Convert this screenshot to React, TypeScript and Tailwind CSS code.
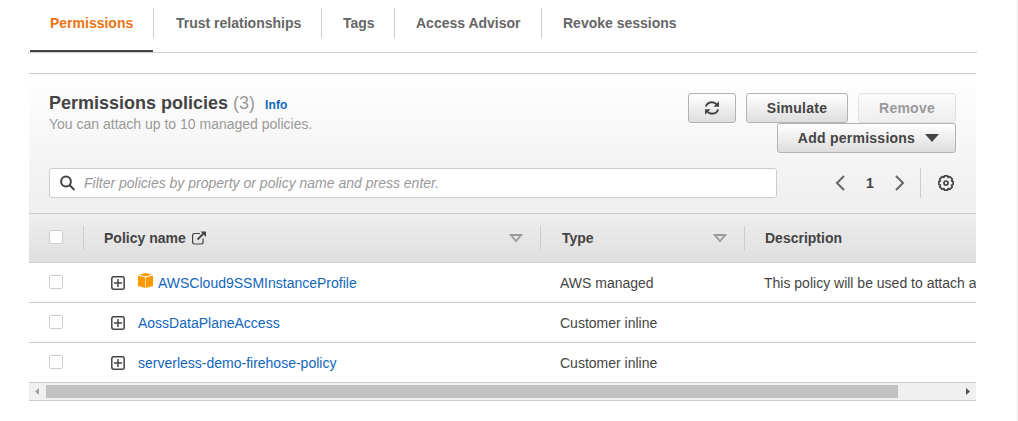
import type { ReactNode } from "react";

const tabs = [
  { label: "Permissions", box: "w-[123px] pl-5 text-[#ec7211]" },
  { label: "Trust relationships", box: "w-[168px] pl-[22px] border-l border-[#ccc] text-[#666]" },
  { label: "Tags", box: "w-[73px] pl-[21px] border-l border-[#ccc] text-[#666]" },
  { label: "Access Advisor", box: "w-[147px] pl-[21px] border-l border-[#ccc] text-[#666]" },
  { label: "Revoke sessions", box: "w-[160px] pl-[21px] border-l border-[#ccc] text-[#666]" },
];

const rows = [
  { name: "AWSCloud9SSMInstanceProfile", type: "AWS managed", description: "This policy will be used to attach a", managed: true },
  { name: "AossDataPlaneAccess", type: "Customer inline", description: "", managed: false },
  { name: "serverless-demo-firehose-policy", type: "Customer inline", description: "", managed: false },
];

function Tabs() {
  return (
    <nav className="ml-[28px] h-[53px] w-[949px] border-b border-[#ccc] pl-[2px] pt-2">
      <div className="flex h-[30px] text-sm font-bold leading-[30px]">
        {tabs.map((t) => (
          <div key={t.label} className={`shrink-0 whitespace-nowrap ${t.box}`}>{t.label}</div>
        ))}
      </div>
      <div className="mt-3 h-[2px] w-[123px] bg-[#444]" />
    </nav>
  );
}

function Button({ children, className = "", disabled = false }: { children: ReactNode; className?: string; disabled?: boolean }) {
  const tone = disabled
    ? "border-[#e3e3e3] bg-linear-to-b from-[#fbfbfb] to-[#eeeeee] text-[#999]"
    : "border-[#b3b3b3] bg-linear-to-b from-white to-[#dedede] text-[#444]";
  return (
    <button
      disabled={disabled}
      className={`flex h-[30px] items-center justify-center rounded-[3px] border text-sm font-bold leading-7 tracking-[0.25px] ${tone} ${className}`}
    >
      {children}
    </button>
  );
}

function RefreshIcon() {
  return (
    <svg width="16" height="16" viewBox="0 0 16 16" fill="none" stroke="#444" strokeWidth="2">
      <path d="M1.800 6.500C2.800 3.800 5 2.300 8 2.300c2 0 3.600.8 4.700 2.200" />
      <path d="M14.200 9.500c-1 2.700-3.200 4.200-6.200 4.200-2 0-3.600-.8-4.700-2.200" />
      <path d="M15 1.200v5.600H9.600z" fill="#444" stroke="none" />
      <path d="M1 14.800V9.200h5.400z" fill="#444" stroke="none" />
    </svg>
  );
}

function SearchIcon() {
  return (
    <svg width="16" height="16" viewBox="0 0 16 16" fill="none" stroke="#444" strokeWidth="2">
      <circle cx="6" cy="6.500" r="4.900" />
      <path d="M9.500 10l5 5" />
    </svg>
  );
}

function ArrowIcon({ flip = false }: { flip?: boolean }) {
  return (
    <svg width="10" height="16" viewBox="0 0 10 16" fill="none" stroke="#666" strokeWidth="2">
      <path d={flip ? "M1 1l7 7-7 7" : "M9 1L2 8l7 7"} />
    </svg>
  );
}

function GearIcon() {
  return (
    <svg width="16" height="16" viewBox="0 0 16 16" fill="none" stroke="#444" strokeWidth="1.700" strokeLinejoin="round">
      <path d="M6.500.9h3l.6 1.500 1.700-.7 2.500 2.500-.7 1.700 1.500.6v3l-1.500.6.7 1.700-2.500 2.500-1.700-.7-.6 1.500h-3l-.6-1.500-1.700.7-2.500-2.500.7-1.700-1.500-.6v-3l1.500-.6-.7-1.700 2.500-2.500 1.700.7z" />
      <circle cx="8" cy="8" r="2" />
    </svg>
  );
}

function ExternalIcon() {
  return (
    <svg width="15" height="14" viewBox="0 0 15 14" fill="none" stroke="#444" strokeWidth="1.200">
      <path d="M8 2.500H2.500Q.6 2.500.6 4.400v6.700q0 1.900 1.900 1.900h6.700q1.900 0 1.900-1.900V7.500" />
      <path d="M5.500 8.500L12 2" strokeWidth="1.800" />
      <path d="M8.500.500H14V6z" fill="#444" stroke="none" />
    </svg>
  );
}

function SortIcon() {
  return (
    <svg width="14" height="9" viewBox="0 0 14 9" fill="none" stroke="#999" strokeWidth="1.800">
      <path d="M1.800 1h10.400L7 7.200z" />
    </svg>
  );
}

function PlusIcon() {
  return (
    <svg width="14" height="14" viewBox="0 0 14 14" fill="none" stroke="#444">
      <rect x=".8" y=".8" width="12.400" height="12.400" rx="2" strokeWidth="1.500" />
      <path d="M7 3v8M3 7h8" strokeWidth="1.500" />
    </svg>
  );
}

function CubeIcon() {
  return (
    <svg width="15" height="15" viewBox="0 0 15 15" fill="#ff9900">
      <path d="M7.500 0L14 1.700 7.500 3.400 1 1.700z" />
      <path d="M0 2.500l7.200 1.900V15L0 13z" />
      <path d="M15 2.500L7.800 4.400V15L15 13z" />
    </svg>
  );
}

function Checkbox() {
  return <span className="block size-[14px] shrink-0 rounded-[2px] border border-[#ccc] bg-white" />;
}

function PanelHeader() {
  return (
    <header className="h-[139px] bg-linear-to-b from-white to-[#eeeeee] pl-5 pr-5 pt-[19px]">
      <div className="flex h-[75px] justify-between">
        <div className="-mt-px">
          <h2 className="flex h-[22px] items-baseline text-lg font-bold leading-[22px] text-[#444]">
            Permissions policies
            <span className="ml-[5px] font-normal text-[#999]">(3)</span>
            <a className="ml-[10px] text-xs font-bold tracking-[0.1px] text-[#1166bb]">Info</a>
          </h2>
          <p className="text-sm leading-5 text-[#999]">You can attach up to 10 managed policies.</p>
        </div>
        <div className="flex flex-col items-end">
          <div className="flex gap-[10px]">
            <Button className="w-[48px]"><RefreshIcon /></Button>
            <Button className="w-[102px]">Simulate</Button>
            <Button className="w-[98px]" disabled>Remove</Button>
          </div>
          <Button className="w-[179px] gap-[10px] pl-1">
            Add permissions
            <svg width="14" height="8" viewBox="0 0 14 8" fill="#444"><path d="M0 0h14L7 8z" /></svg>
          </Button>
        </div>
      </div>
      <div className="flex items-center justify-between">
        <div className="flex h-[30px] w-[728px] items-center rounded-[3px] border border-[#ccc] bg-white pl-[10px]">
          <SearchIcon />
          <span className="ml-2 text-sm italic text-[#999]">Filter policies by property or policy name and press enter.</span>
        </div>
        <div className="flex h-[30px] items-center pr-[2px] text-sm text-[#444]">
          <ArrowIcon />
          <span className="ml-[21px] w-2 font-bold">1</span>
          <span className="ml-[21px]"><ArrowIcon flip /></span>
          <span className="ml-[15px] mr-[17px] h-[30px] w-px bg-[#ccc]" />
          <GearIcon />
        </div>
      </div>
    </header>
  );
}

function PolicyTable() {
  return (
    <div>
      <div className="flex h-[50px] items-center border-y border-[#ccc] bg-linear-to-b from-[#eeeeee] to-[#dfdfdf] text-sm font-bold text-[#444]">
        <div className="w-[54px] pb-[2px] pl-5"><Checkbox /></div>
        <div className="flex h-6 w-[457px] items-center justify-between border-l border-[#ccc] pl-5 pr-[17px]">
          <span className="flex items-center gap-[6px]">Policy name<ExternalIcon /></span>
          <SortIcon />
        </div>
        <div className="flex h-6 w-[204px] items-center justify-between border-l border-[#ccc] pl-[21px] pr-[17px]">
          Type<SortIcon />
        </div>
        <div className="flex h-6 flex-1 items-center border-l border-[#ccc] pl-5">Description</div>
      </div>
      {rows.map((r) => (
        <div key={r.name} className="flex h-10 items-center overflow-hidden whitespace-nowrap border-b border-[#ccc] text-sm text-[#444]">
          <div className="w-[82px] shrink-0 pb-[1px] pl-5"><Checkbox /></div>
          <div className="flex w-[449px] shrink-0 items-center">
            <span className="mt-px"><PlusIcon /></span>
            {r.managed && <span className="ml-[13px] pb-[5px]"><CubeIcon /></span>}
            <a className={r.managed ? "ml-[5px] text-[#1166bb]" : "ml-[13px] text-[#1166bb]"}>{r.name}</a>
          </div>
          <div className="w-[204px] shrink-0">{r.type}</div>
          <div>{r.description}</div>
        </div>
      ))}
    </div>
  );
}

function Scrollbar() {
  return (
    <div className="flex h-[18px] items-center border-b border-[#ccc] bg-[#f0f0f0]">
      <svg className="ml-[6px] mr-[7px]" width="4" height="7" viewBox="0 0 4 7" fill="#a3a3a3"><path d="M4 0v7L0 3.500z" /></svg>
      <div className="h-[13px] w-[852px] bg-[#c1c1c1]" />
      <svg className="ml-[68px]" width="4" height="7" viewBox="0 0 4 7" fill="#505050"><path d="M0 0v7l4-3.500z" /></svg>
    </div>
  );
}

export default function App() {
  return (
    <main className="h-[421px] w-[1018px] overflow-hidden border-r border-[#eee] bg-white font-['Liberation_Sans',Arial,sans-serif]">
      <Tabs />
      <section className="ml-[29px] mt-5 w-[947px] border-t border-[#ccc]">
        <PanelHeader />
        <PolicyTable />
        <Scrollbar />
      </section>
    </main>
  );
}
